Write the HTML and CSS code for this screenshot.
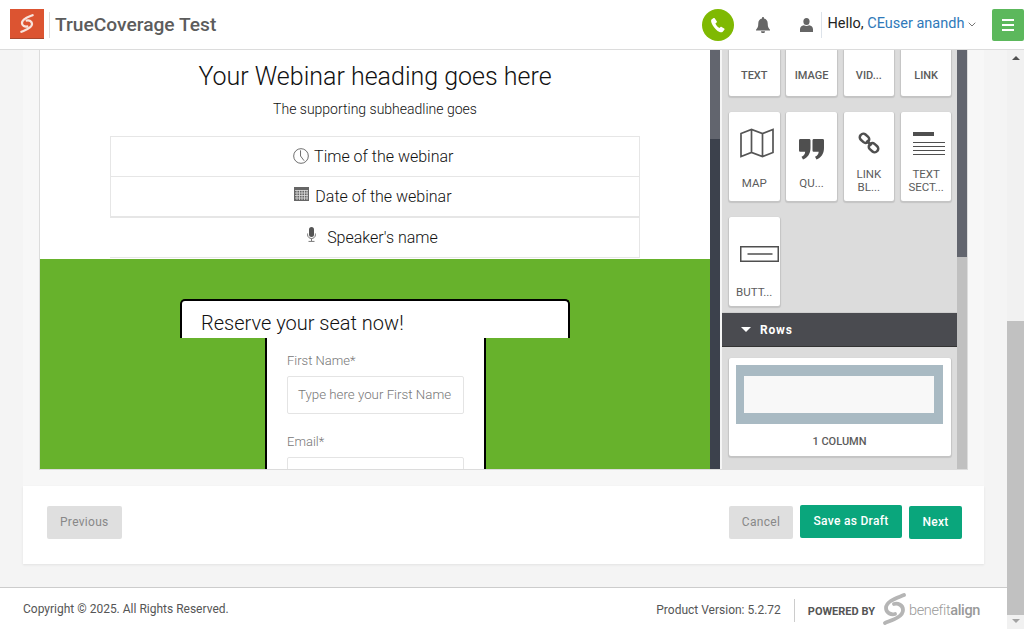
FILE: index.html
```html
<!DOCTYPE html>
<html lang="en">
<head>
<meta charset="UTF-8">
<meta name="viewport" content="width=device-width, initial-scale=1.0">
<title>TrueCoverage Test</title>
<link rel="stylesheet" href="styles.css">
</head>
<body>

<header class="topbar">
    <div class="brand-logo">
        <svg width="14" height="19" viewBox="0 0 23 32"><path d="M21 2C14 5 3 8 3 15c0 5 5 7 9 6M2 30c7-3 18-6 18-13 0-5-5-7-9-6" fill="none" stroke="#f8e3dc" stroke-width="3.800" stroke-linecap="round"/></svg>
    </div>
    <div class="brand-name">TrueCoverage Test</div>
    <div class="topbar-right">
        <div class="call-btn">
            <svg width="16" height="16" viewBox="0 0 16 16"><path d="M3.600 1 1.500 2.400C.8 3 .9 5 2.500 8c1.800 3.300 4.500 6 7 7 1.400.5 2.600.4 3.200-.2l1.700-2c.3-.4.200-.9-.2-1.200l-2.600-1.700c-.4-.2-.8-.2-1.100.1l-1 1.100c-1.500-.6-3.500-2.900-4.100-4.600l1.200-.9c.4-.3.500-.7.300-1.100L4.700 1.300C4.400.9 4 .8 3.600 1z" fill="#fff"/></svg>
        </div>
        <svg class="bell" width="16" height="16" viewBox="0 0 16 16"><path d="M8 0c-.6 0-1 .4-1 1v.6C4.700 2.100 3.300 4 3.300 6.300c0 3.400-.8 5-2.300 6.500v.7h14v-.7c-1.500-1.500-2.300-3.100-2.300-6.500C12.700 4 11.300 2.100 9 1.600V1c0-.6-.4-1-1-1zM6 14.300a2 2 0 0 0 4 0z" fill="#666"/></svg>
        <svg class="user" width="13" height="14" viewBox="0 0 13 14"><ellipse cx="6.500" cy="3.500" rx="3.100" ry="3.500" fill="#666"/><path d="M0 14v-2.800C0 9 1.600 7.800 3.800 7.300c1.500 1 3.900 1 5.400 0C11.400 7.800 13 9 13 11.200V14z" fill="#666"/></svg>
        <div class="hello">Hello, <span class="hello-name">CEuser anandh</span>
            <svg width="8" height="5" viewBox="0 0 8 5"><path d="M.7.7 4 4 7.300.7" fill="none" stroke="#777" stroke-width="1"/></svg>
        </div>
        <div class="menu-btn"><span></span><span></span><span></span></div>
    </div>
</header>

<div class="layout">
    <div class="page">
        <div class="work">
            <div class="editor">
                <div class="canvas">
                    <div class="canvas-top">
                        <h1>Your Webinar heading goes here</h1>
                        <p class="subhead">The supporting subheadline goes</p>
                        <div class="info-table">
                            <div class="info-row">
                                <svg width="16" height="16" viewBox="0 0 17 17"><circle cx="8.500" cy="8.500" r="7.800" fill="none" stroke="#666" stroke-width="1"/><path d="M8 2.500v6l3.800 5" fill="none" stroke="#666" stroke-width="1"/></svg>
                                Time of the webinar
                            </div>
                            <div class="info-row">
                                <svg class="up" width="15" height="14" viewBox="0 0 15 14"><rect width="15" height="14" fill="#666"/><path d="M1 3.500h13M1 6h13M1 8.500h13M1 11h13M3 3v10M5.500 3v10M8 3v10M10.500 3v10M13 3v10" stroke="#ddd" stroke-width=".8"/></svg>
                                Date of the webinar
                            </div>
                            <div class="info-row info-row-last">
                                <svg class="up mic" width="9" height="15" viewBox="0 0 9 15"><rect x="2" width="5" height="10" rx="2.500" fill="#555"/><path d="M.6 6.500v1.300c0 2.200 1.700 3.700 3.900 3.700s3.900-1.500 3.900-3.700V6.500M4.500 11.500V14M1.500 14.400h6" fill="none" stroke="#777" stroke-width="1"/></svg>
                                Speaker's name
                            </div>
                        </div>
                    </div>
                    <div class="canvas-green">
                        <div class="seat-head">Reserve your seat now!</div>
                        <div class="seat-form">
                            <label>First Name*</label>
                            <div class="fake-input">Type here your First Name</div>
                            <label class="label-next">Email*</label>
                            <div class="fake-input"></div>
                        </div>
                    </div>
                </div>
                <div class="rail"><div class="rail-thumb"></div></div>
                <div class="panel">
                    <div class="panel-scroll">
                        <div class="tiles">
                            <div class="tile tile-cut">TEXT</div>
                            <div class="tile tile-cut">IMAGE</div>
                            <div class="tile tile-cut">VID...</div>
                            <div class="tile tile-cut">LINK</div>
                            <div class="tile">
                                <svg class="icon-map" width="34" height="30" viewBox="0 0 34 30"><path d="M1 5.500 11.500 1.500 22.500 5.500 33 1.500V24.500L22.500 28.500 11.500 24.500 1 28.500zM11.500 1.500V24.500M22.500 5.500V28.500" fill="none" stroke="#555" stroke-width="1.700"/></svg>
                                <span class="tile-label map-label">MAP</span>
                            </div>
                            <div class="tile">
                                <svg class="icon-quote" width="25" height="21" viewBox="0 0 25 21"><path d="M1.500 0h8.500c1 0 1.500.5 1.500 1.500v7.500c0 5.500-2.800 9.800-7.500 11.500L2.500 17.800c2.300-1 3.500-2.600 3.700-5H1.500C.5 12.800 0 12.300 0 11.300V1.500C0 .5.500 0 1.500 0zM15 0h8.500c1 0 1.500.5 1.500 1.500v7.500c0 5.500-2.800 9.800-7.500 11.500L16 17.800c2.300-1 3.500-2.600 3.700-5H15c-1 0-1.500-.5-1.500-1.500V1.500C13.500.5 14 0 15 0z" fill="#4f4f4f"/></svg>
                                <span class="tile-label quote-label">QU...</span>
                            </div>
                            <div class="tile tile-two">
                                <svg class="icon-link" width="22" height="22" viewBox="0 0 22 22"><g fill="none" stroke="#4f4f4f" stroke-width="2.500"><rect x="1.500" y="2.800" width="10" height="7" rx="3.200" transform="rotate(42 6.500 6.300)"/><rect x="10.500" y="12.200" width="10" height="7" rx="3.200" transform="rotate(42 15.500 15.700)"/><path d="M8.500 8.500l5 5"/></g></svg>
                                <span class="tile-label link-label">LINK<br>BL...</span>
                            </div>
                            <div class="tile tile-two">
                                <svg class="icon-section" width="32" height="24" viewBox="0 0 32 24"><path d="M0 2h21" stroke="#4f4f4f" stroke-width="4"/><path d="M0 10.500h32M0 14.500h32M0 18.500h32M0 22.500h32" stroke="#4f4f4f" stroke-width="1"/></svg>
                                <span class="tile-label section-label">TEXT<br>SECT...</span>
                            </div>
                            <div class="tile">
                                <svg class="icon-btn" width="39" height="17" viewBox="0 0 39 17"><rect x=".75" y=".75" width="37.500" height="14.500" fill="none" stroke="#4f4f4f" stroke-width="1.500"/><path d="M7.500 8h25" stroke="#4f4f4f" stroke-width="1.500"/></svg>
                                <span class="tile-label btn-label">BUTT...</span>
                            </div>
                        </div>
                        <div class="rows-head"><i class="caret"></i>Rows</div>
                        <div class="row-card">
                            <div class="row-preview"><div></div></div>
                            <div class="row-label">1 COLUMN</div>
                        </div>
                    </div>
                    <div class="panel-bar"><div class="panel-thumb"></div></div>
                </div>
            </div>
        </div>

        <div class="actions">
            <button class="btn btn-grey">Previous</button>
            <div class="actions-right">
                <button class="btn btn-grey btn-cancel">Cancel</button>
                <button class="btn btn-green btn-draft">Save as Draft</button>
                <button class="btn btn-green btn-next">Next</button>
            </div>
        </div>

        <footer class="footer">
            <div>Copyright © 2025. All Rights Reserved.</div>
            <div class="footer-right">
                <div class="version">Product Version: 5.2.72</div>
                <div class="powered">POWERED BY</div>
                <svg width="23" height="32" viewBox="0 0 23 32"><path d="M21 2C14 5 3 8 3 15c0 5 5 7 9 6M2 30c7-3 18-6 18-13 0-5-5-7-9-6" fill="none" stroke="#b5b5b5" stroke-width="3.800" stroke-linecap="round"/></svg>
                <div class="ba-name">benefit<b>align</b></div>
            </div>
        </footer>
    </div>

    <div class="scrollbar">
        <i class="arrow-up"></i>
        <div class="scrollbar-track"><div class="scrollbar-thumb"></div></div>
        <i class="arrow-down"></i>
    </div>
</div>

</body>
</html>
```

FILE: styles.css
```css
* {
    box-sizing: border-box;
}
html, body {
    height: 100%;
}
body {
    margin: 0;
    overflow: hidden;
    font-family: Roboto, "Liberation Sans", sans-serif;
    background-color: #f4f4f4;
    color: #222;
}

/* top bar */
.topbar {
    height: 50px;
    display: flex;
    align-items: center;
    background-color: #fff;
    border-bottom: 1px solid #dcdcdc;
    padding-left: 10px;
}
.brand-logo {
    width: 34px;
    height: 30px;
    margin-top: -1px;
    display: flex;
    align-items: center;
    justify-content: center;
    background-color: #dc5431;
    border-bottom: 1px solid #a8482e;
}
.brand-name {
    margin-left: 5px;
    padding-left: 5px;
    height: 26px;
    line-height: 26px;
    border-left: 1px solid #ddd;
    font-size: 19.200px;
    font-weight: 500;
    color: #5c5c5c;
}
.topbar-right {
    margin-left: auto;
    display: flex;
    align-items: center;
}
.call-btn {
    width: 32px;
    height: 32px;
    border-radius: 50%;
    background-color: #7fb902;
    display: flex;
    align-items: center;
    justify-content: center;
}
.bell {
    margin-left: 21px;
}
.user {
    margin-left: 29px;
}
.hello {
    margin-left: 8px;
    padding-left: 5px;
    height: 26px;
    line-height: 23px;
    border-left: 1px solid #dde3ea;
    font-size: 14.500px;
    color: #222;
    white-space: nowrap;
}
.hello svg {
    vertical-align: 1px;
}
.hello-name {
    color: #2f79b9;
}
.menu-btn {
    width: 32px;
    height: 32px;
    margin-left: 16px;
    border-radius: 2px;
    background-color: #5cb85c;
    display: flex;
    flex-direction: column;
    align-items: center;
    justify-content: center;
    gap: 3px;
}
.menu-btn span {
    width: 12px;
    height: 2px;
    background-color: #fff;
}

/* page below the bar */
.layout {
    height: 579px;
    display: flex;
}
.page {
    flex: 1;
    display: flex;
    flex-direction: column;
}
.scrollbar {
    width: 17px;
    background-color: #f1f1f1;
    display: flex;
    flex-direction: column;
    align-items: center;
}
.arrow-up {
    margin-top: 6px;
    border: 4px solid transparent;
    border-top: 0;
    border-bottom: 4px solid #505050;
}
.arrow-down {
    margin-bottom: 6px;
    border: 4px solid transparent;
    border-bottom: 0;
    border-top: 4px solid #a3a3a3;
}
.scrollbar-track {
    flex: 1;
    width: 100%;
    padding-top: 261px;
    padding-bottom: 4px;
}
.scrollbar-thumb {
    height: 100%;
    background-color: #c1c1c1;
}

/* editor */
.work {
    width: 961px;
    height: 436px;
    margin-left: 23px;
    padding-left: 16px;
    background-color: #f7f7f7;
}
.editor {
    height: 420px;
    width: 929px;
    display: flex;
    border: 1px solid #dcdcdc;
    border-top: 0;
    overflow: hidden;
}
.canvas {
    width: 670px;
    display: flex;
    flex-direction: column;
    background-color: #fff;
}
.canvas-top {
    height: 209px;
    flex-shrink: 0;
    padding-top: 12px;
    text-align: center;
}
.canvas-top h1 {
    margin: 0;
    font-size: 25px;
    line-height: 30px;
    font-weight: 300;
    color: #111;
}
.subhead {
    margin: 7px 0 0;
    font-size: 14px;
    line-height: 20px;
    font-weight: 300;
    color: #111;
}
.info-table {
    width: 530px;
    margin: 17px auto 0;
}
.info-row {
    height: 40px;
    padding-right: 4px;
    line-height: 40px;
    border: 1px solid #e6e6e6;
    border-bottom: 0;
    font-size: 16px;
    font-weight: 300;
    color: #111;
}
.info-row svg {
    vertical-align: -2px;
    margin-right: 2px;
}
.info-row svg.up {
    vertical-align: 1px;
}
.info-row svg.mic {
    margin-right: 7px;
}
.info-row-last {
    height: 42px;
    border-top-width: 2px;
    border-left: 0;
    border-bottom: 1px solid #e6e6e6;
}
.canvas-green {
    flex: 1;
    min-height: 0;
    overflow: hidden;
    padding-top: 40px;
    background-color: #67b22c;
}
.seat-head {
    width: 390px;
    height: 39px;
    margin-left: 140px;
    padding: 10px 0 0 19px;
    background-color: #fff;
    border: 2px solid #000;
    border-bottom: 0;
    border-radius: 5px 5px 0 0;
    font-size: 20px;
    line-height: 24px;
    font-weight: 300;
    color: #111;
}
.seat-form {
    width: 221px;
    height: 140px;
    margin-left: 225px;
    padding: 14px 20px 0;
    background-color: #fff;
    border: solid #000;
    border-width: 0 2px;
}
.seat-form label {
    display: block;
    font-size: 13px;
    line-height: 17px;
    font-weight: 300;
    color: #777;
}
.seat-form .label-next {
    margin-top: 19px;
}
.fake-input {
    height: 38px;
    margin-top: 7px;
    padding-left: 10px;
    border: 1px solid #e4e4e4;
    border-radius: 2px;
    font-size: 13.300px;
    line-height: 36px;
    font-weight: 300;
    color: #777;
    white-space: nowrap;
}
.rail {
    width: 10px;
    background-color: #3c414c;
}
.rail-thumb {
    height: 89px;
    background-color: #62656e;
}

/* widget panel */
.panel {
    flex: 1;
    padding-left: 2px;
    display: flex;
    background-color: #f5f5f5;
}
.panel-scroll {
    width: 235px;
    background-color: #dcdcdc;
    overflow: hidden;
}
.panel-bar {
    width: 10px;
    background-color: #c0c0c0;
}
.panel-thumb {
    height: 207px;
    background-color: #62656e;
}
.tiles {
    padding-left: 7px;
    display: grid;
    grid-template-columns: repeat(4, 50.500px);
    column-gap: 6.800px;
    row-gap: 16px;
}
.tile {
    height: 89px;
    padding-top: 16px;
    background-color: #fff;
    border-radius: 2px;
    box-shadow: 0 1px 1px 1px #c4c4c4;
    text-align: center;
    font-size: 11px;
    font-weight: 500;
    color: #5c5c5c;
}
.tile svg {
    display: block;
    margin: 0 auto;
}
.tile-cut {
    height: 46px;
    padding-top: 19px;
    line-height: 13px;
    border-radius: 0 0 2px 2px;
}
.tile-two {
    padding-top: 19px;
}
.tile-label {
    display: block;
    line-height: 13px;
    font-weight: 400;
    font-size: 11.500px;
}
.tile .icon-map {
    margin: 0 0 0 11px;
}
.map-label {
    margin-top: 19px;
}
.tile .icon-quote {
    margin-top: 11px;
}
.quote-label {
    margin-top: 17px;
}
.tile .icon-link {
    margin-top: 1px;
}
.link-label {
    margin-top: 14px;
}
.tile .icon-section {
    margin: 1px 0 0 12px;
}
.section-label {
    margin-top: 12px;
}
.tile .icon-btn {
    margin: 13px 0 0 11px;
}
.btn-label {
    margin-top: 23px;
}
.rows-head {
    height: 35px;
    margin-top: 6px;
    padding-left: 19px;
    display: flex;
    align-items: center;
    background-color: #4a4b50;
    border-top: 1px solid #cfcfcf;
    border-bottom: 1px solid #333;
    font-size: 12px;
    font-weight: 700;
    letter-spacing: .8px;
    color: #fff;
}
.caret {
    margin-right: 9px;
    border: 5px solid transparent;
    border-bottom: 0;
    border-top: 5px solid #fff;
}
.row-card {
    width: 222px;
    height: 98px;
    margin: 11px 0 0 7px;
    padding: 7px 8px 0 7px;
    background-color: #fff;
    border-radius: 2px;
    box-shadow: 0 1px 1px 1px #c4c4c4;
}
.row-preview {
    height: 59px;
    padding: 11px 9px 11px 8px;
    background-color: #a9bac3;
}
.row-preview div {
    height: 100%;
    background-color: #f8f8f8;
}
.row-label {
    margin-top: 11px;
    text-align: center;
    font-size: 11px;
    font-weight: 500;
    color: #5c5c5c;
}

/* bottom buttons */
.actions {
    width: 961px;
    height: 78px;
    margin-left: 23px;
    padding: 20px 22px 0 24px;
    display: flex;
    justify-content: space-between;
    background-color: #fff;
    box-shadow: 0 1px 2px #e2e2e2;
}
.actions-right {
    display: flex;
    gap: 7px;
}
.btn {
    height: 33px;
    padding: 0 13px 2px;
    border: 0;
    border-radius: 2px;
    font-family: inherit;
    font-size: 12px;
    letter-spacing: .3px;
}
.btn-grey {
    background-color: #dfdfdf;
    color: #888;
}
.btn-green {
    background-color: #0aa67c;
    color: #fff;
    font-weight: 500;
}
.btn-cancel {
    width: 64px;
    padding-left: 0;
    padding-right: 0;
}
.btn-draft {
    width: 102px;
    margin-top: -1px;
    padding-left: 0;
    padding-right: 0;
}
.btn-next {
    width: 53px;
    padding-left: 0;
    padding-right: 0;
}

/* footer */
.footer {
    flex: 1;
    margin-top: 23px;
    padding: 0 27px 0 23px;
    display: flex;
    align-items: center;
    justify-content: space-between;
    background-color: #fff;
    border-top: 1px solid #ccc;
    font-size: 12px;
    color: #555;
}
.footer-right {
    display: flex;
    align-items: center;
}
.version {
    height: 23px;
    margin-top: 4px;
    line-height: 23px;
    padding-right: 13px;
    border-right: 1px solid #ccc;
}
.powered {
    margin: 5px 8px 0 13px;
    font-size: 11px;
    font-weight: 700;
    color: #555;
}
.ba-name {
    margin: 4px 0 0 3px;
    font-size: 14.500px;
    font-weight: 300;
    letter-spacing: -.35px;
    color: #999;
}
.ba-name b {
    font-weight: 500;
}
```
